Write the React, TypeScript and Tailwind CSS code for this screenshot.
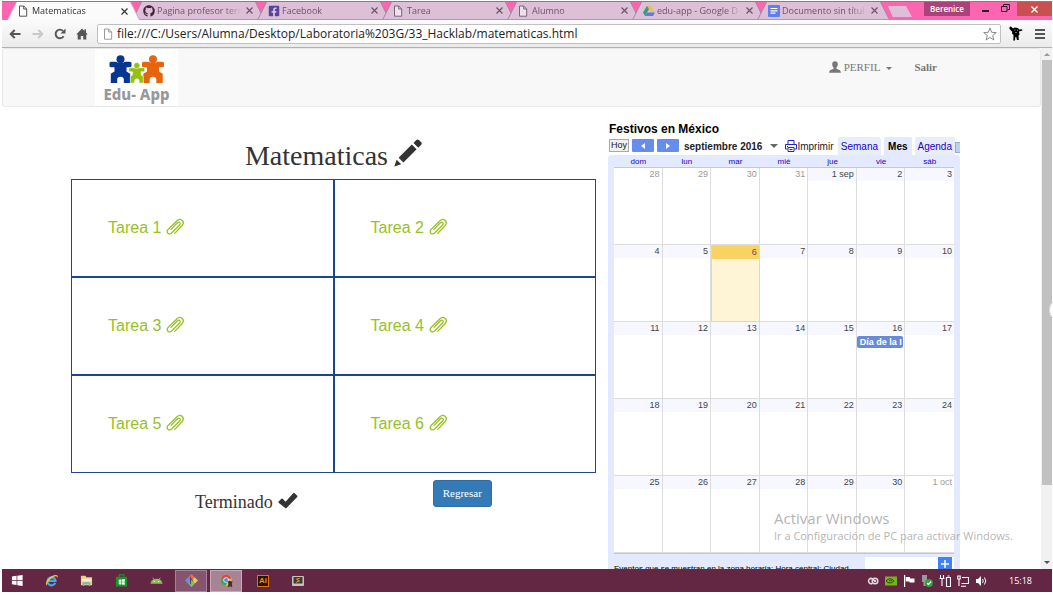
import React from "react";
import { FaFacebookSquare, FaGithub } from "react-icons/fa";

type IconProps = { className?: string };

function PageIcon({ className }: IconProps) {
  return (
    <svg viewBox="0 0 10 12" className={className} fill="none" stroke="currentColor" strokeWidth="1">
      <path d="M1.5 1h4.2l3 3v7.2h-7.2z" fill="#fff" fillOpacity=".5" />
      <path d="M5.7 1v3h3" />
    </svg>
  );
}

function DriveIcon({ className }: IconProps) {
  return (
    <svg viewBox="0 0 12 12" className={className}>
      <path d="M4 .8h4l4 6.8H8z" fill="#f0bd58" />
      <path d="M4 .8 0 7.6 2 11l4-6.800z" fill="#3b9c77" />
      <path d="M4 7.600h8L10 11H2z" fill="#5c7de0" />
    </svg>
  );
}

function DocsIcon({ className }: IconProps) {
  return (
    <svg viewBox="0 0 12 12" className={className}>
      <rect width="12" height="12" rx="1" fill="#5f80e8" />
      <path d="M2.500 3.500h7M2.500 5.800h7M2.500 8.200h5" stroke="#fff" strokeWidth="1.200" />
    </svg>
  );
}

function PencilIcon({ className }: IconProps) {
  return (
    <svg viewBox="0 0 28 28" className={className} fill="currentColor">
      <path d="M.3 27.600 2.600 20.800 7.200 25.300z" />
      <path d="M4.600 18.700 17.800 5.600 22.600 10.300 9.400 23.500z" />
      <path d="M19.500 3.900 22.300 1q1.300-1.100 2.600 0l2.300 2.300q1.100 1.200 0 2.500l-2.900 2.900z" />
    </svg>
  );
}

function CheckIcon({ className }: IconProps) {
  return (
    <svg viewBox="0 0 20 17" className={className} fill="currentColor">
      <path d="M.6 9.600 3.400 6.800q.6-.5 1.200 0L7.600 9.800 15.200 1.200q.6-.6 1.200-.1l2.800 2.600q.6.600 0 1.200L8.500 16q-.7.600-1.300 0L.6 10.800q-.5-.6 0-1.200z" />
    </svg>
  );
}

function UserIcon({ className }: IconProps) {
  return (
    <svg viewBox="0 0 12 12" className={className} fill="currentColor">
      <path d="M6 .3c1.800 0 2.800 1.200 2.800 3 0 1.500-.6 2.700-1.400 3.400-.3.900.2 1.200 1.200 1.600 1.800.6 3 1.100 3.200 2.600v.8H.2v-.8c.2-1.500 1.400-2 3.200-2.600 1-.4 1.500-.7 1.200-1.600C3.800 6 3.200 4.800 3.200 3.300 3.200 1.500 4.200.3 6 .3z" />
    </svg>
  );
}

function HomeIcon({ className }: IconProps) {
  return (
    <svg viewBox="0 0 12 12" className={className} fill="currentColor">
      <path d="M6 .5 8.500 3V1.200H10v3.300L11.800 6.500H10.300V11.500H7.200V8H4.800v3.500H1.700V6.500H.2z" />
    </svg>
  );
}

function ClipIcon({ className }: IconProps) {
  return (
    <svg viewBox="0 0 18 17" className={className} fill="none" stroke="currentColor" strokeWidth="1.300" strokeLinecap="round">
      <path d="M8.700 15.400 16 7.700c1.500-1.700 1.600-3.900.2-5.200-1.500-1.400-3.700-1.200-5.200.3L2.300 11.200c-1.400 1.400-1.500 3-.4 4 1.100 1 2.700.8 4-.5l7.500-7.500c1-1 1.100-1.900.4-2.600-.7-.7-1.700-.5-2.600.4L5 11.400" />
    </svg>
  );
}

function PrinterIcon({ className }: IconProps) {
  return (
    <svg viewBox="0 0 12 12" className={className} fill="#fff" stroke="#2222cc" strokeWidth="1">
      <path d="M3 4.500v-4h6v4M2.500 9h-2V4.500h11V9h-2" />
      <path d="M3 7.500h6v4H3zM4.500 9.500h3M2 6.500h1" />
    </svg>
  );
}

function ReloadIcon({ className }: IconProps) {
  return (
    <svg viewBox="0 0 12 12" className={className}>
      <path d="M9.600 8.200A4.300 4.300 0 1 1 9 2.900" fill="none" stroke="currentColor" strokeWidth="1.900" />
      <path d="M11.500.5v5h-5z" fill="currentColor" />
    </svg>
  );
}

function ArrowIcon({ className }: IconProps) {
  return (
    <svg viewBox="0 0 12 10" className={className} fill="none" stroke="currentColor" strokeWidth="2">
      <path d="M11.500 5H2M5.700 1 1.700 5l4 4" />
    </svg>
  );
}

function StarIcon({ className }: IconProps) {
  return (
    <svg viewBox="0 0 14 14" className={className} fill="none" stroke="currentColor">
      <path d="m7 1 1.700 4.300 4.600.3-3.600 2.900 1.200 4.500L7 10.500 3.100 13l1.200-4.500L.7 5.600l4.600-.3z" />
    </svg>
  );
}

function CowIcon({ className }: IconProps) {
  return (
    <svg viewBox="0 0 14 15" className={className} fill="#000">
      <path d="M.5 1 2 .5l2 2 1.500-1 3.500.5 1 1.500L13 3.200l.5 1.300-3.500 1 .5 3L9.500 9.500l.3 4.500H8l-.8-3-.9.200-.3 3.300H4.300L4.500 9 3.200 7.800 3 5.500.5 3z" />
      <path d="M5.500 4h1M8 4.200h1M6.200 6.600h1.600" stroke="#ddd" strokeWidth=".7" />
    </svg>
  );
}

function Logo() {
  return (
    <svg viewBox="0 0 56 30" className="h-[30px] w-[56px]">
      <g fill="#06368f">
        <circle cx="11.500" cy="4.300" r="4" />
        <path d="M2 6.800h4.500q1.500 0 2.200 1h5.600q.7-1 2.200-1H21q1.500 0 1.500 1.500v2.400q0 1.500-1.500 1.500h-3.500v4.300l3.700 2.300V28h-6.400v-3.500q0-2.800-3.300-2.800t-3.300 2.800V28H1.800v-9.200l3.700-2.300v-4.300H2q-1.500 0-1.500-1.500V8.300Q.5 6.800 2 6.800z" />
      </g>
      <g fill="#e8640c">
        <circle cx="44" cy="4.300" r="4" />
        <path d="M34.500 6.800H39q1.500 0 2.200 1h5.600q.7-1 2.200-1h4.500q1.500 0 1.500 1.500v2.400q0 1.500-1.500 1.500H50v4.300l3.700 2.300V28h-6.400v-3.500q0-2.800-3.300-2.800t-3.300 2.800V28h-6.400v-9.200l3.700-2.300v-4.300h-3.500q-1.500 0-1.500-1.500V8.300q0-1.500 1.500-1.500z" />
      </g>
      <g fill="#97bf0d" stroke="#fff" strokeWidth=".5">
        <path d="M21 12.700h13.500q1.200 0 1.200 1.100v1.900q0 1.100-1.200 1.100H32v3l2.300 1.700V28h-4.200v-2.200q0-2-2.300-2t-2.300 2V28h-4.200v-6.500l2.300-1.700v-3H21q-1.200 0-1.200-1.100v-1.900q0-1.100 1.200-1.100z" />
        <circle cx="27.800" cy="10.600" r="3" />
      </g>
    </svg>
  );
}

const tabs: { title: string; icon: React.ReactNode; active?: boolean }[] = [
  { title: "Matematicas", icon: <PageIcon className="h-3 w-[10px] text-[#555]" />, active: true },
  { title: "Pagina profesor tern", icon: <FaGithub className="size-3 text-[#40263c]" /> },
  { title: "Facebook", icon: <FaFacebookSquare className="size-3 text-[#53479c]" /> },
  { title: "Tarea", icon: <PageIcon className="h-3 w-[10px] text-[#7b6477]" /> },
  { title: "Alumno", icon: <PageIcon className="h-3 w-[10px] text-[#7b6477]" /> },
  { title: "edu-app - Google D", icon: <DriveIcon className="size-3" /> },
  { title: "Documento sin títul", icon: <DocsIcon className="size-3" /> },
];

function TabStrip() {
  return (
    <div className="flex h-[19px] shrink-0 items-stretch border-t border-[#c9588f] bg-[#fc66b0] pl-[5px]">
      {tabs.map((t) => (
        <div
          key={t.title}
          className={`-mr-2 flex w-[133px] min-w-0 pl-px pr-px [clip-path:polygon(0_100%,9px_0,calc(100%-9px)_0,100%_100%)] ${
            t.active ? "relative z-10 bg-[#d9a3c3]" : "bg-[#a9829f]"
          }`}
        >
          <div
            className={`flex min-w-0 flex-1 items-center pl-[10px] pr-[11px] [clip-path:polygon(0_100%,9px_0,calc(100%-9px)_0,100%_100%)] ${
              t.active ? "bg-[#fcfbfc] text-[#333]" : "border-b border-[#b795b0] bg-[#dcc0d8] text-[#6a5467]"
            }`}
          >
            <span className="flex w-[14px] shrink-0">{t.icon}</span>
            <a
              href="#"
              className="min-w-0 flex-1 whitespace-nowrap font-['Open_Sans','Noto_Sans',sans-serif] text-[9px] leading-4 [mask-image:linear-gradient(to_right,#000_80%,transparent)]"
            >
              {t.title}
            </a>
            <button aria-label={`Cerrar ${t.title}`} className="ml-1 shrink-0">
              <svg viewBox="0 0 7 7" className="size-[7px]" stroke="currentColor" strokeWidth="1.200">
                <path d="M.5.5l6 6M6.500.5l-6 6" />
              </svg>
            </button>
          </div>
        </div>
      ))}
      <button
        aria-label="Nueva pestaña"
        className="ml-[6px] mt-[4px] h-[11px] w-6 shrink-0 bg-[#dcc0d8] [clip-path:polygon(0_0,75%_0,100%_100%,20%_100%)]"
      />
      <div className="ml-auto flex shrink-0 items-start text-[#222]">
        <span className="flex h-[14px] w-[46px] items-center justify-center bg-[#aa437a] font-['Open_Sans',sans-serif] text-[8px] font-semibold text-white">
          Berenice
        </span>
        <button aria-label="Minimizar" className="ml-3 mt-2 h-[2px] w-[7px] bg-[#222]" />
        <button aria-label="Restaurar" className="ml-3">
          <svg viewBox="0 0 9 8" className="mt-[2px] h-2 w-[9px]" fill="none" stroke="currentColor">
            <path d="M.5 2.500h5.500v5H.5zM2.500 2V.5H8.500v5H6.500" />
          </svg>
        </button>
        <button aria-label="Cerrar" className="ml-[7px] flex h-[14px] w-[35px] items-center justify-center bg-[#c75050] text-white">
          <svg viewBox="0 0 7 7" className="size-[7px]" stroke="currentColor" strokeWidth="1.400">
            <path d="M.5.5l6 6M6.500.5l-6 6" />
          </svg>
        </button>
      </div>
    </div>
  );
}

function AddressBar() {
  return (
    <div className="flex h-7 shrink-0 items-center border-b border-[#b0b0b0] bg-linear-to-b from-[#fbfbfb] to-[#ebebeb] pl-[7px] pr-[7px] text-[#555]">
      <button aria-label="Atrás">
        <ArrowIcon className="h-[10px] w-3" />
      </button>
      <button aria-label="Adelante" className="ml-[11px] text-[#c8c8c8]">
        <ArrowIcon className="h-[10px] w-3 rotate-180" />
      </button>
      <button aria-label="Recargar" className="ml-[10px]">
        <ReloadIcon className="size-3" />
      </button>
      <button aria-label="Inicio" className="ml-[10px]">
        <HomeIcon className="size-3" />
      </button>
      <div className="ml-[9px] flex h-5 min-w-0 flex-1 items-center rounded-[2px] border border-[#c0c0c0] bg-white pl-[5px] pr-[3px]">
        <PageIcon className="h-3 w-[10px] shrink-0 text-[#999]" />
        <input
          aria-label="Dirección"
          defaultValue="file:///C:/Users/Alumna/Desktop/Laboratoria%203G/33_Hacklab/matematicas.html"
          className="ml-1 min-w-0 flex-1 font-['Open_Sans','Noto_Sans',sans-serif] text-[12px] leading-4 text-[#222] outline-none"
        />
        <button aria-label="Marcar" className="text-[#888]">
          <StarIcon className="size-[14px]" />
        </button>
      </div>
      <button aria-label="Extensión" className="ml-2">
        <CowIcon className="h-[15px] w-[14px]" />
      </button>
      <button aria-label="Menú" className="ml-3 flex w-[10px] flex-col gap-[2px]">
        <span className="h-[2px] w-full bg-[#555]" />
        <span className="h-[2px] w-full bg-[#555]" />
        <span className="h-[2px] w-full bg-[#555]" />
      </button>
    </div>
  );
}

function Navbar() {
  return (
    <nav className="flex h-[59px] shrink-0 items-start justify-between rounded-[3px] border border-[#e7e7e7] bg-[#f8f8f8] pl-[92px] pr-[103px] font-['Liberation_Serif',serif] text-[11px] leading-4 text-[#777]">
      <a href="#" aria-label="Edu-App" className="flex h-[57px] w-[83px] flex-col items-center bg-white pt-[6px]">
        <Logo />
        <span className="font-['Noto_Sans','Open_Sans',sans-serif] text-[15px] font-extrabold leading-[18px] text-[#98989c]">Edu- App</span>
      </a>
      <div className="flex items-center pt-[10px]">
        <a href="#" className="flex items-center">
          <UserIcon className="mr-[3px] size-3" />
          PERFIL
          <span className="ml-[6px] mt-[3px] border-x-[3px] border-t-[3px] border-x-transparent border-t-[#777]" />
        </a>
        <a href="#" className="ml-[22px] font-bold">
          Salir
        </a>
      </div>
    </nav>
  );
}

function Tasks() {
  return (
    <section className="pt-[32px] text-[#333]">
      <h1 className="flex h-[34px] items-center justify-center font-['Liberation_Serif',serif] text-[28px]">
        Matematicas
        <PencilIcon className="-mt-[6px] ml-[6px] size-7" />
      </h1>
      <ul className="mt-[6px] grid grid-cols-2">
        {[1, 2, 3, 4, 5, 6].map((n) => (
          <li key={n} className="flex h-[98px] items-center border border-[#1d4690] pl-9">
            <a href="#" className="flex items-center font-['Liberation_Sans',sans-serif] text-[16px] text-[#97c11f]">
              Tarea {n}
              <ClipIcon className="mb-1 ml-[5px] h-[17px] w-[18px]" />
            </a>
          </li>
        ))}
      </ul>
      <div className="mt-[7px] flex items-start pl-[124px] font-['Liberation_Serif',serif]">
        <p className="flex items-center pt-2 text-[18px] leading-7">
          Terminado
          <CheckIcon className="-mt-1 ml-[5px] h-[17px] w-5" />
        </p>
        <button className="ml-[135px] h-[27px] rounded-[3px] border border-[#2e6da4] bg-[#337ab7] px-[9px] text-[11px] text-white">
          Regresar
        </button>
      </div>
    </section>
  );
}

const weekdays = ["dom", "lun", "mar", "mié", "jue", "vie", "sáb"];
const weeks = [
  ["28", "29", "30", "31", "1 sep", "2", "3"],
  ["4", "5", "6", "7", "8", "9", "10"],
  ["11", "12", "13", "14", "15", "16", "17"],
  ["18", "19", "20", "21", "22", "23", "24"],
  ["25", "26", "27", "28", "29", "30", "1 oct"],
];

function isOutside(week: number, day: number) {
  return (week === 0 && day < 4) || (week === 4 && day === 6);
}

function DayCell({ week, day }: { week: number; day: number }) {
  const today = week === 1 && day === 2;
  const outside = isOutside(week, day);
  const event = week === 2 && day === 5;
  return (
    <td
      className={`h-[77px] overflow-hidden p-0 align-top ${
        today
          ? "border border-[#f9d976] bg-[#fef5d6]"
          : "border-b border-r border-[#dddddd] bg-white last:border-r-0"
      }`}
    >
      <div
        className={`h-[13px] pr-[2px] text-right text-[9px] leading-[13px] ${
          today ? "bg-[#fad163] text-[#555]" : outside ? "text-[#999]" : "bg-[#f7f8ff] text-[#444]"
        }`}
      >
        {weeks[week][day]}
      </div>
      {event && (
        <a
          href="#"
          className="mr-px mt-px block h-3 overflow-hidden whitespace-nowrap rounded-[2px] bg-[#668cd9] pl-[3px] text-[9px] font-bold leading-3 text-white"
        >
          Día de la I
        </a>
      )}
    </td>
  );
}

function Calendar() {
  return (
    <section className="pt-[14px] font-['Liberation_Sans',sans-serif] text-[10px]">
      <h2 className="pl-px text-[12px] font-bold leading-4 text-black">Festivos en México</h2>
      <div className="flex h-[18px] items-stretch overflow-hidden pl-px text-[#222]">
        <button className="mr-[3px] mt-[2px] h-[13px] w-5 shrink-0 border border-[#aaa] bg-[#f0f0f0] text-[9px] leading-[11px]">Hoy</button>
        <button aria-label="Anterior" className="mr-[3px] mt-[2px] flex h-[13px] w-[22px] shrink-0 items-center justify-center rounded-[1px] bg-[#668cee]">
          <span className="border-y-[3px] border-r-4 border-y-transparent border-r-white" />
        </button>
        <button aria-label="Siguiente" className="mt-[2px] flex h-[13px] w-[22px] shrink-0 items-center justify-center rounded-[1px] bg-[#668cee]">
          <span className="border-y-[3px] border-l-4 border-y-transparent border-l-white" />
        </button>
        <button className="ml-[5px] flex shrink-0 items-center whitespace-nowrap font-bold">
          septiembre 2016
          <span className="ml-2 border-x-[4px] border-t-[4px] border-x-transparent border-t-[#666]" />
        </button>
        <a href="#" className="ml-[7px] flex shrink-0 items-center">
          <PrinterIcon className="size-3" />
          Imprimir
        </a>
        <div className="ml-auto flex gap-[3px] text-[#2200cc]">
          <button className="rounded-t-[2px] bg-[#e8eef7] px-[3px]">Semana</button>
          <button className="rounded-t-[2px] bg-[#e3e9ff] px-1 font-bold text-black">Mes</button>
          <button className="rounded-t-[2px] bg-[#e8eef7] px-[3px]">Agenda</button>
          <span className="-ml-[3px] mt-[5px] h-[11px] w-[5px] border border-r-0 border-[#8fabdf] bg-[#bfd0f5]" />
        </div>
      </div>
      <div className="rounded-t-[3px] bg-[#e3e9ff] pl-[6px] pr-[6px]">
        <table className="w-full table-fixed border-separate border-spacing-0">
          <thead>
            <tr>
              {weekdays.map((d) => (
                <th key={d} className="h-[13px] border-b border-[#b8c8f5] p-0 pt-[2px] text-[8px] font-normal leading-[10px] text-[#2200cc]">
                  {d}
                </th>
              ))}
            </tr>
          </thead>
          <tbody>
            {weeks.map((w, i) => (
              <tr key={i}>
                {w.map((_, j) => (
                  <DayCell key={j} week={i} day={j} />
                ))}
              </tr>
            ))}
          </tbody>
        </table>
        <div className="flex h-10 items-start justify-between border-t border-[#b3c7f7] pt-[3px]">
          <p className="whitespace-nowrap pt-[6px] text-[8px] leading-[12px] text-black">
            Eventos que se muestran en la zona horaria: Hora central: Ciudad
          </p>
          <div className="flex h-[30px] w-[89px] justify-end bg-white pr-[2px]">
            <button aria-label="Añadir" className="flex size-[14px] items-center justify-center bg-[#3f82f7] text-white">
              <svg viewBox="0 0 8 8" className="size-2" stroke="currentColor" strokeWidth="1.500">
                <path d="M4 0v8M0 4h8" />
              </svg>
            </button>
          </div>
        </div>
      </div>
    </section>
  );
}

const taskbarApps: { name: string; icon: React.ReactNode; style: string }[] = [
  {
    name: "Inicio",
    style: "",
    icon: <path d="M1 2.800 6 2v4.500H1zM6.800 1.900 12.500 1v5.500H6.800zM1 7.300h5v4.500L1 11zM6.800 7.300h5.700V13l-5.700-1z" fill="#fff" />,
  },
  {
    name: "Internet Explorer",
    style: "",
    icon: (
      <>
        <path d="M11 9.500A4.300 4.300 0 1 1 11.300 7.500H3.500" fill="none" stroke="#3fa9e8" strokeWidth="2.400" />
        <path d="M1.500 12.800C-1.200 9 7.500-1 13.200 1.500c1 1 .3 2.500-.4 3.300.3-1 .3-1.800-.3-2.200C9.500 1.200 2.500 7.500 1.500 12.800z" fill="#f3c73a" />
      </>
    ),
  },
  {
    name: "Explorador",
    style: "",
    icon: (
      <>
        <path d="M1 2h5l1 1.500h6V12H1z" fill="#e9cf78" />
        <path d="M2 5h10v3H2z" fill="#fdf4c4" />
        <path d="M3 9h8v4H9.500v-2h-5v2H3z" fill="#6db5e5" />
      </>
    ),
  },
  {
    name: "Tienda",
    style: "",
    icon: (
      <>
        <path d="M1 3h12v10.500H1z" fill="#119a22" />
        <path d="M4.500 3V1h5v2" stroke="#119a22" strokeWidth="1.200" fill="none" />
        <path d="M4 6.200 6.700 6v2.400H4zM7.300 6 10.500 5.500v2.900H7.300zM4 9h2.700v2.200L4 11zM7.300 9h3.200v2.700l-3.200-.4z" fill="#fff" />
      </>
    ),
  },
  {
    name: "Android",
    style: "",
    icon: (
      <>
        <path d="M.5 10.500a6.500 5.500 0 0 1 13 0z" fill="#8fb85c" />
        <path d="M3 4l1.500 2.500M11 4 9.500 6.500" stroke="#8fb85c" />
        <path d="M4 8h1.200M8.800 8H10" stroke="#fff" />
      </>
    ),
  },
  {
    name: "Git",
    style: "border border-[#a98299] bg-[#85546f]",
    icon: (
      <>
        <path d="M7 0l3.500 3.500L7 7 3.500 3.500z" fill="#e96b50" />
        <path d="M3.500 3.500 7 7l-3.500 3.500L0 7z" fill="#6a8fe0" />
        <path d="M10.500 3.500 14 7l-3.500 3.500L7 7z" fill="#eec948" />
        <path d="M7 7l3.500 3.500L7 14l-3.500-3.500z" fill="#7cc36b" />
        <path d="M6 3v8M6 5l3 2.500" stroke="#444" fill="none" />
      </>
    ),
  },
  {
    name: "Chrome",
    style: "border border-[#c3aab8] bg-[#a88396]",
    icon: (
      <>
        <circle cx="6.500" cy="6.500" r="6" fill="#e8c83c" />
        <path d="M1.300 3.500A6 6 0 0 1 11.700 3.500L12 5H6.500L4 7.500z" fill="#dd4b3e" />
        <path d="M1.300 3.500A6 6 0 0 0 6 12.500l2-4L4 7.500z" fill="#3aa757" />
        <circle cx="6.500" cy="6.500" r="2.600" fill="#4a8af4" stroke="#fff" strokeWidth=".8" />
        <path d="M7.500 7.500 9 8l1.500-1L12 8l1.500-.3L12.800 10l.4 4h-1.500l-.6-2-.8 2H8.700L9 10z" fill="#4a2c20" />
      </>
    ),
  },
];

function Taskbar() {
  return (
    <footer className="flex h-[23px] shrink-0 items-center bg-[#632743] text-white">
      {taskbarApps.map((a) => (
        <button key={a.name} aria-label={a.name} className={`mr-[3px] flex h-[22px] w-8 shrink-0 items-center justify-center first:w-[30px] ${a.style}`}>
          <svg viewBox="0 0 14 14" className="size-[13px]">
            {a.icon}
          </svg>
        </button>
      ))}
      <button className="ml-[12px] size-3 shrink-0 border border-[#d27a17] bg-[#2b1503] font-['Liberation_Sans',sans-serif] text-[8px] font-bold leading-[10px] text-[#f08c1a]">
        Ai
      </button>
      <button aria-label="Sublime Text" className="ml-[23px] shrink-0">
        <svg viewBox="0 0 12 12" className="size-3">
          <rect y="1" width="12" height="10" rx="1" fill="#c7c3b8" />
          <rect x="1.500" y="2" width="9" height="6.500" fill="#3c3c3c" />
          <path d="M7.800 3.200 4.500 4.200 7.500 6 4.200 7.300" stroke="#f09a2d" fill="none" />
        </svg>
      </button>
      <div className="ml-auto flex shrink-0 items-center gap-[6px] pr-5">
        <svg viewBox="0 0 12 12" className="size-3" fill="none" stroke="#ddd" strokeWidth="1.500">
          <path d="M5.500 8.300A2.600 2.600 0 1 1 5.500 3.800L8 6.300" />
          <circle cx="8" cy="6" r="2.800" />
          <circle cx="8" cy="6" r=".5" />
        </svg>
        <svg viewBox="0 0 12 12" className="size-3">
          <rect y="1.500" width="12" height="9" fill="#77b31c" />
          <path d="M1 6q4-4.500 8 0-4 4-8 0zM4 6q1.500-1.500 3 0" fill="none" stroke="#31500a" />
        </svg>
        <svg viewBox="0 0 12 12" className="size-3" fill="#fff">
          <path d="M1 0h1.200v12H1zM2.800 2H7v1.500h4.500v4H6.500V6.500H2.800z" />
        </svg>
        <svg viewBox="0 0 12 12" className="size-3">
          <path d="M1 0h5v7H1zM2.500 7h2v4h-2z" fill="#999" />
          <circle cx="8" cy="8" r="4" fill="#2ba33a" />
          <path d="m6 8 1.500 1.500L10 6.500" stroke="#fff" strokeWidth="1.200" fill="none" />
        </svg>
        <svg viewBox="0 0 12 12" className="size-3" fill="none" stroke="#fff" strokeWidth="1.100">
          <path d="M1.500 0v3M4.500 0v3M.5 3.500h5M3 3.500V11M7.500 2.500h4v9h-4zM8.500 1h2" />
        </svg>
        <svg viewBox="0 0 12 12" className="size-3" fill="none" stroke="#fff" strokeWidth="1.100">
          <path d="M5 2.500h6.500v6H4.500M4 11.300h5M.8 1h2.400v3H.8zM2 4v7" />
        </svg>
        <svg viewBox="0 0 12 12" className="size-3" fill="#fff">
          <path d="M1 4h2l3-3v10L3 8H1z" />
          <path d="M7.500 4q1.500 2 0 4M9.500 2.500q2.500 3.500 0 7" fill="none" stroke="#fff" />
        </svg>
        <time className="ml-4 font-['Open_Sans',sans-serif] text-[9px] leading-3">15:18</time>
      </div>
    </footer>
  );
}

function Scrollbar() {
  return (
    <div aria-hidden="true" className="flex w-[11px] shrink-0 flex-col items-center bg-[#f1f1f1] py-[5px]">
      <span className="border-x-[3px] border-b-[3px] border-x-transparent border-b-[#999]" />
      <span className="mt-1 w-[10px] flex-1 bg-[#c1c1c1]" />
      <span className="mt-[76px] border-x-[3px] border-t-[3px] border-x-transparent border-t-[#505050]" />
    </div>
  );
}

export default function App() {
  return (
    <div className="relative flex h-screen flex-col overflow-hidden bg-white pb-[3px] pl-[2px] pr-px pt-px">
      <TabStrip />
      <AddressBar />
      <div className="flex min-h-0 flex-1">
        <main className="min-w-0 flex-1 overflow-hidden bg-white">
          <Navbar />
          <div className="grid grid-cols-[525fr_352fr] gap-3 pl-[69px] pr-[81px]">
            <Tasks />
            <Calendar />
          </div>
        </main>
        <Scrollbar />
      </div>
      <Taskbar />
      <div className="pointer-events-none absolute bottom-[51px] right-10 w-[239px] whitespace-nowrap font-['Open_Sans','Noto_Sans',sans-serif] text-[#a0a0a0]/80">
        <p className="text-[15px] leading-5">Activar Windows</p>
        <p className="text-[11px] leading-4">Ir a Configuración de PC para activar Windows.</p>
      </div>
      <div className="absolute -right-5 top-[298px] size-6 rounded-full border border-[#ddd] bg-white" />
    </div>
  );
}
